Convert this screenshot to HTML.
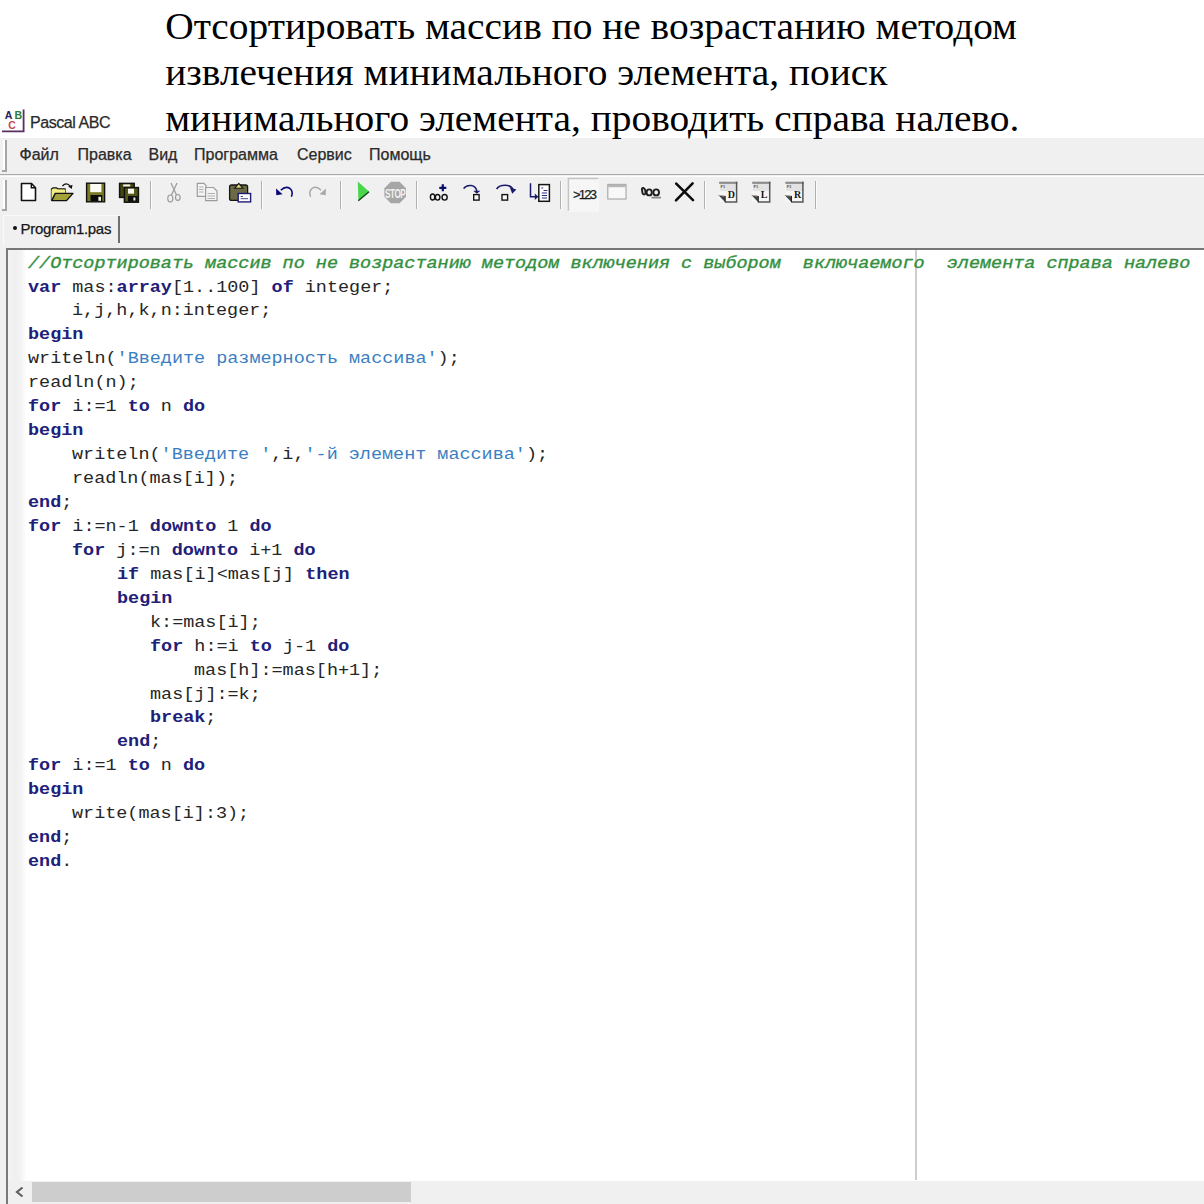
<!DOCTYPE html>
<html><head><meta charset="utf-8">
<style>
html,body{margin:0;padding:0;}
body{width:1204px;height:1204px;position:relative;overflow:hidden;background:#fff;font-family:"Liberation Sans",sans-serif;}
.abs{position:absolute;}
.title{position:absolute;left:165.2px;font-family:"Liberation Serif",serif;font-size:39.4px;line-height:46px;color:#000;white-space:pre;transform:scaleY(0.96);transform-origin:0 36px;}
.ui{position:absolute;font-family:"Liberation Sans",sans-serif;font-size:16px;line-height:18px;color:#2a2a2a;white-space:pre;-webkit-text-stroke:0.25px #2a2a2a;}
#menubar{position:absolute;left:0;top:138px;width:1204px;height:37px;background:#f0f0f0;}
#tbsep{position:absolute;left:0;top:174px;width:1204px;height:1px;background:#a9a9a9;}
#tbhl{position:absolute;left:0;top:176px;width:1204px;height:1px;background:#fdfdfd;}
#toolbar{position:absolute;left:0;top:177px;width:1204px;height:71px;background:#f0f0f0;}
.grip{position:absolute;width:2px;background:#a6a6a6;border-left:2px solid #fdfdfd;}
.grip:after{content:"";position:absolute;left:-3px;bottom:0;width:5px;height:2px;background:#a6a6a6;}
.sep{position:absolute;width:1px;height:28px;top:181px;background:#b4b4b4;border-right:1px solid #fcfcfc;}
#editor{position:absolute;left:6px;top:248px;width:1198px;height:956px;background:#fff;border-top:2px solid #777;border-left:2px solid #7a7a7a;box-sizing:border-box;}
#gutter{position:absolute;left:8px;top:250px;width:18px;height:931px;background:linear-gradient(to right,#f3f3f3 0%,#efefef 45%,#f4f4f4 75%,#fbfbfb 92%,#fff 100%);}
#margin{position:absolute;left:915px;top:250px;width:2px;height:930px;background:#cdcdcd;}
#hscroll{position:absolute;left:8px;top:1181px;width:1196px;height:23px;background:#f0f0f0;}
#thumb{position:absolute;left:32px;top:1182px;width:379px;height:20px;background:#cdcdcd;}
.cl{position:absolute;font-family:"Liberation Mono",monospace;font-size:16px;line-height:18px;letter-spacing:0px;transform:scaleX(1.1529);transform-origin:0 0;white-space:pre;color:#262626;}
.cl .k{font-weight:bold;color:#20207a;}
.cl .s{color:#3a7fc2;}
.cl .c{color:#34903f;font-style:italic;-webkit-text-stroke:0.35px #34903f;}
</style></head>
<body>
<!-- title text -->
<div class="title" style="top:2.5px">Отсортировать массив по не возрастанию методом</div>
<div class="title" style="top:48.5px">извлечения минимального элемента, поиск</div>

<!-- app chrome -->
<div class="abs" style="left:0;top:138px;width:1204px;height:1066px;background:#f0f0f0"></div>
<div id="menubar"></div>
<div id="tbsep"></div>
<div id="tbhl"></div>
<div id="toolbar"></div>

<div class="title" style="top:95px">минимального элемента, проводить справа налево.</div>

<!-- logo -->
<svg class="abs" style="left:0;top:104px" width="30" height="32" viewBox="0 0 30 32">
  <text x="4.8" y="14.5" font-family="Liberation Sans" font-weight="bold" font-size="10.6" fill="#23235e">A</text>
  <text x="14.6" y="14.5" font-family="Liberation Sans" font-weight="bold" font-size="10.6" fill="#2f7a30">B</text>
  <text x="8.3" y="24.6" font-family="Liberation Sans" font-weight="bold" font-size="10.4" fill="#c24a4a">C</text>
  <path d="M23.6 5.6 V27.3 H2" fill="none" stroke="#5a2e60" stroke-width="1.8"/>
</svg>
<div class="ui" style="left:30px;top:113.5px;font-size:16px;letter-spacing:-0.45px;color:#2a2a2a">Pascal ABC</div>

<!-- menubar -->
<div class="grip" style="left:3px;top:140px;height:32px"></div>
<div class="ui" style="left:19.5px;top:146px">Файл</div>
<div class="ui" style="left:77.5px;top:146px">Правка</div>
<div class="ui" style="left:148.5px;top:146px">Вид</div>
<div class="ui" style="left:194px;top:146px">Программа</div>
<div class="ui" style="left:297px;top:146px">Сервис</div>
<div class="ui" style="left:369px;top:146px">Помощь</div>

<!-- toolbar -->
<div class="grip" style="left:3px;top:180px;height:31px"></div>
<svg class="abs" style="left:0;top:175px" width="830" height="40" viewBox="0 175 830 40">
 <!-- separators -->
 <g stroke-width="1">
  <path d="M150.5 181 V209 M261.5 181 V209 M340.5 181 V209 M416.5 181 V209 M560.5 181 V209 M704.5 181 V209 M815.5 181 V209" stroke="#b0b0b0"/>
  <path d="M151.5 181 V209 M262.5 181 V209 M341.5 181 V209 M417.5 181 V209 M561.5 181 V209 M705.5 181 V209 M816.5 181 V209" stroke="#fcfcfc"/>
 </g>
 <!-- new -->
 <path d="M21.5 183.5 H31.5 L35.5 187.8 V200.5 H21.5 Z" fill="#fff" stroke="#111" stroke-width="1.6" stroke-linejoin="round"/>
 <path d="M31.3 183.5 V187.8 H35.5" fill="none" stroke="#111" stroke-width="1.4"/>
 <!-- open -->
 <path d="M51.5 200.5 V189 L53 187.8 H56.5 L58 189 H65 V193" fill="#f2ee86" stroke="#111" stroke-width="1.3"/>
 <path d="M51.5 200.5 V189.5 H65 V193.5 H54.5 Z" fill="#f2ee86"/>
 <path d="M51.8 200.6 L55.2 193.4 H73 L66.5 200.6 Z" fill="#a3a23a" stroke="#111" stroke-width="1.4" stroke-linejoin="round"/>
 <path d="M62.4 186 Q66.5 181.5 70.3 186.3" fill="none" stroke="#111" stroke-width="1.2"/>
 <path d="M68.2 186.6 L72.5 184.8 L71.8 189 Z" fill="#111"/>
 <!-- save -->
 <rect x="86.6" y="183.2" width="18" height="18.6" fill="#7a7a22" stroke="#111" stroke-width="1.4"/>
 <rect x="90.2" y="184" width="11.2" height="8.2" fill="#fbfbf3"/>
 <rect x="90.5" y="195" width="11.8" height="6.2" fill="#0d0d0d"/>
 <rect x="98.4" y="196.8" width="2.6" height="4" fill="#f0f0e0"/>
 <!-- save all -->
 <rect x="119.6" y="183.4" width="14.6" height="14" fill="#46460f" stroke="#111" stroke-width="1.5"/>
 <rect x="123.2" y="184.4" width="7" height="2.2" fill="#f2f2e6"/>
 <rect x="124.4" y="187.6" width="14" height="14.6" fill="#55551a" stroke="#111" stroke-width="1.5"/>
 <rect x="128" y="188.7" width="6" height="5" fill="#f7f7ee"/>
 <rect x="128" y="196" width="9.6" height="5.6" fill="#0d0d0d"/>
 <rect x="133.4" y="197.5" width="2" height="3" fill="#e8e8d8"/>
 <!-- cut (disabled) -->
 <g fill="none" stroke="#9a9a9a" stroke-width="1.2">
  <path d="M171 183 L176.5 195 M177 183 L171.5 195"/>
  <ellipse cx="170.3" cy="198.4" rx="2.5" ry="3.4"/>
  <ellipse cx="177.8" cy="197.4" rx="2.3" ry="2.9"/>
 </g>
 <!-- copy (disabled) -->
 <g fill="#f4f4f4" stroke="#9c9c9c" stroke-width="1.2">
  <path d="M197.3 183.4 H204 L206 185.5 V196.3 H197.3 Z"/>
  <path d="M205.6 187.5 H213.5 L217 191 V200.7 H205.6 Z"/>
 </g>
 <path d="M199 187 H203.5 M199 189.5 H203.5 M199 192 H203.5 M207.5 193.5 H215 M207.5 196 H215 M207.5 198.5 H215" stroke="#a8a8a8" stroke-width="0.9"/>
 <!-- paste -->
 <rect x="229.6" y="185" width="18" height="15.4" rx="2" fill="#6c6a46" stroke="#151515" stroke-width="1.3"/>
 <path d="M234.5 188.3 L238.8 183.4 L243 188.3 Z" fill="#d8d27a" stroke="#151515" stroke-width="1.1"/>
 <rect x="238.2" y="193.5" width="12.4" height="8.4" fill="#fff" stroke="#1d1d78" stroke-width="1.4"/>
 <path d="M240.6 196.5 H243 M240.6 198.7 H248" stroke="#4a4a8a" stroke-width="1"/>
 <!-- undo -->
 <path d="M280.8 190.2 Q285.5 185.5 290 188.5 Q293.5 191.5 291.4 196.8" fill="none" stroke="#0a0a78" stroke-width="1.6"/>
 <path d="M276 188.5 L276.3 195.2 L282.6 194.3 Z" fill="#0a0a78"/>
 <!-- redo disabled -->
 <path d="M321 190.2 Q316.5 185.5 312 188.5 Q308.5 191.5 310.6 196.8" fill="none" stroke="#a9a9a9" stroke-width="1.5"/>
 <path d="M326 188.5 L325.7 195.2 L319.4 194.3 Z" fill="#a9a9a9"/>
 <!-- run -->
 <path d="M357.8 181.6 L369.2 191.7 L358.4 201 Z" fill="#49d64c"/>
 <path d="M369 191.7 L358.3 200.8" stroke="#1a4a1a" stroke-width="1.4"/>
 <!-- stop -->
 <path d="M390.8 181.8 H399.6 L406 188.2 V196.8 L399.6 203.2 H390.8 L384.4 196.8 V188.2 Z" fill="#a6a6a6"/>
 <text x="395.2" y="197.6" font-family="Liberation Sans" font-weight="bold" font-size="12" fill="#f2f2f2" text-anchor="middle" letter-spacing="-0.6" transform="translate(395.2 0) scale(0.68 1) translate(-395.2 0)">STOP</text>
 <!-- watch add -->
 <path d="M442.8 184.3 V191.3 M439.3 187.8 H446.3" stroke="#0c0c6a" stroke-width="2.2"/>
 <g fill="none" stroke="#111" stroke-width="1.4">
  <ellipse cx="432.6" cy="197" rx="2.2" ry="3"/>
  <ellipse cx="437.6" cy="197.3" rx="2.3" ry="2.8"/>
  <ellipse cx="444.6" cy="197.3" rx="2.6" ry="2.8"/>
 </g>
 <!-- step into -->
 <path d="M463.6 188.6 Q466 185 471 185.5 Q476.5 186.3 476.8 191.5" fill="none" stroke="#1a1a6a" stroke-width="1.6"/>
 <path d="M473.3 190.8 H480.4 L476.8 193.8 Z" fill="#1a1a6a"/>
 <rect x="473.7" y="194.6" width="5.4" height="5.5" fill="#fafafa" stroke="#151515" stroke-width="1.4"/>
 <!-- step over -->
 <path d="M496.6 189 Q499 185.3 505 185.3 Q511 185.3 513 189.5" fill="none" stroke="#1a1a6a" stroke-width="1.6"/>
 <path d="M510 187.8 L516.4 189.6 L512.2 193.8 Z" fill="#1a1a6a"/>
 <rect x="502" y="194.6" width="5.6" height="5.5" fill="#fafafa" stroke="#151515" stroke-width="1.4"/>
 <!-- run to cursor -->
 <path d="M530.5 183.3 V196.8 H536" fill="none" stroke="#1a1a6a" stroke-width="1.5"/>
 <path d="M534.8 193.6 L538.4 196.8 L534.8 200 Z" fill="#1a1a6a"/>
 <rect x="538.8" y="184.6" width="10.6" height="16.7" fill="#fff" stroke="#151515" stroke-width="1.5"/>
 <path d="M541.3 188 H543.2 M543.5 190.5 H547.4 M541.8 193 H547 M541.8 195.5 H547 M541.8 198 H547" stroke="#2b2b8a" stroke-width="1.1"/>
 <!-- >123 pressed -->
 <path d="M568.5 211 V178.6 H598.6" fill="none" stroke="#c4c4c4" stroke-width="1.6"/>
 <path d="M598.2 178.6 V211 H568.5" fill="none" stroke="#fbfbfb" stroke-width="1"/>
 <rect x="569.3" y="179.4" width="28.6" height="31" fill="#f6f6f6"/>
 <text x="573" y="198.6" font-family="Liberation Sans" font-size="13" fill="#1a1a1a" letter-spacing="-1.75" stroke="#1a1a1a" stroke-width="0.25">&gt;123</text>
 <!-- window disabled -->
 <rect x="607.8" y="184.4" width="18.2" height="14.6" fill="#f8f8f8" stroke="#a4a4a4" stroke-width="1.1"/>
 <rect x="608.2" y="184.6" width="17.4" height="2.6" fill="#b6b6b6"/>
 <!-- glasses -->
 <g fill="none" stroke="#1e1e1e" stroke-width="1.9">
  <path d="M642 190 Q641.5 187.5 643.5 188 Q646 189.5 645.5 193.5 Q644 195.5 642.6 193.5 Z"/>
  <ellipse cx="649.2" cy="192.4" rx="2.6" ry="3"/>
  <ellipse cx="656.2" cy="192.4" rx="2.8" ry="3"/>
 </g>
 <path d="M651.5 197.6 H661" stroke="#888" stroke-width="1.8"/>
 <!-- X -->
 <path d="M676.2 183.6 L693 200.2 M692.6 183.4 L676 200.3" stroke="#0d0d0d" stroke-width="2.6" stroke-linecap="round"/>
 <!-- D L R -->
 <g transform="translate(718.3 181.7)">
  <rect x="0.8" y="0" width="18.2" height="20.3" fill="#f6f6f6"/>
  <rect x="1.5" y="2.2" width="16.5" height="7" fill="#e2e2e2"/>
  <rect x="0.8" y="0" width="18.2" height="2.2" fill="#8c8c8c"/>
  <path d="M18.3 0 V20.3 H6.8" stroke="#555" stroke-width="1.5" fill="none"/>
  <path d="M0 13.2 L6.9 20.6 V14.2 Z" fill="#444"/><path d="M6.9 14.2 V20.6" stroke="#222" stroke-width="1"/>
  <path d="M0.6 13.6 L6.2 14.4" stroke="#aaa" stroke-width="0.8"/>
  <text x="2.2" y="6.8" font-size="4" font-weight="bold" font-family="Liberation Sans" fill="#555">F1</text>
  <text x="9.4" y="16.8" font-size="10" font-weight="bold" font-family="Liberation Serif" fill="#151515">D</text>
</g>
<g transform="translate(751.4 181.7)">
  <rect x="0.8" y="0" width="18.2" height="20.3" fill="#f6f6f6"/>
  <rect x="1.5" y="2.2" width="16.5" height="7" fill="#e2e2e2"/>
  <rect x="0.8" y="0" width="18.2" height="2.2" fill="#8c8c8c"/>
  <path d="M18.3 0 V20.3 H6.8" stroke="#555" stroke-width="1.5" fill="none"/>
  <path d="M0 13.2 L6.9 20.6 V14.2 Z" fill="#444"/><path d="M6.9 14.2 V20.6" stroke="#222" stroke-width="1"/>
  <path d="M0.6 13.6 L6.2 14.4" stroke="#aaa" stroke-width="0.8"/>
  <text x="2.2" y="6.8" font-size="4" font-weight="bold" font-family="Liberation Sans" fill="#555">F1</text>
  <text x="9.4" y="16.8" font-size="10" font-weight="bold" font-family="Liberation Serif" fill="#151515">L</text>
</g>
<g transform="translate(784.6 181.7)">
  <rect x="0.8" y="0" width="18.2" height="20.3" fill="#f6f6f6"/>
  <rect x="1.5" y="2.2" width="16.5" height="7" fill="#e2e2e2"/>
  <rect x="0.8" y="0" width="18.2" height="2.2" fill="#8c8c8c"/>
  <path d="M18.3 0 V20.3 H6.8" stroke="#555" stroke-width="1.5" fill="none"/>
  <path d="M0 13.2 L6.9 20.6 V14.2 Z" fill="#444"/><path d="M6.9 14.2 V20.6" stroke="#222" stroke-width="1"/>
  <path d="M0.6 13.6 L6.2 14.4" stroke="#aaa" stroke-width="0.8"/>
  <text x="2.2" y="6.8" font-size="4" font-weight="bold" font-family="Liberation Sans" fill="#555">F1</text>
  <text x="9.4" y="16.8" font-size="10" font-weight="bold" font-family="Liberation Serif" fill="#151515">R</text>
</g>

</svg>


<!-- tab -->
<div class="abs" style="left:3px;top:215px;width:115px;height:29px;background:#f0f0f0;border-top:1px solid #fafafa;border-left:1px solid #fafafa"></div>
<div class="abs" style="left:118px;top:216px;width:2px;height:27px;background:#707070"></div>
<div class="abs" style="left:13px;top:226px;width:4px;height:4px;border-radius:2px;background:#111"></div>
<div class="ui" style="left:20.5px;top:220px;font-size:15px;letter-spacing:-0.3px;color:#111">Program1.pas</div>

<!-- editor -->
<div id="editor"></div>
<div id="gutter"></div>
<div id="margin"></div>
<div class="cl" style="left:28.00px;top:254.60px"><span class="c">//Отсортировать массив по не возрастанию методом включения с выбором  включаемого  элемента справа налево</span></div>
<div class="cl" style="left:28.00px;top:278.54px"><span class="k">var</span><span class="n"> </span><span class="n">mas</span><span class="n">:</span><span class="k">array</span><span class="n">[1..100] </span><span class="k">of</span><span class="n"> </span><span class="n">integer</span><span class="n">;</span></div>
<div class="cl" style="left:72.28px;top:302.48px"><span class="n">i</span><span class="n">,</span><span class="n">j</span><span class="n">,</span><span class="n">h</span><span class="n">,</span><span class="n">k</span><span class="n">,</span><span class="n">n</span><span class="n">:</span><span class="n">integer</span><span class="n">;</span></div>
<div class="cl" style="left:28.00px;top:326.42px"><span class="k">begin</span></div>
<div class="cl" style="left:28.00px;top:350.36px"><span class="n">writeln</span><span class="n">(</span><span class="s">&#x27;Введите размерность массива&#x27;</span><span class="n">);</span></div>
<div class="cl" style="left:28.00px;top:374.30px"><span class="n">readln</span><span class="n">(</span><span class="n">n</span><span class="n">);</span></div>
<div class="cl" style="left:28.00px;top:398.24px"><span class="k">for</span><span class="n"> </span><span class="n">i</span><span class="n">:=1 </span><span class="k">to</span><span class="n"> </span><span class="n">n</span><span class="n"> </span><span class="k">do</span></div>
<div class="cl" style="left:28.00px;top:422.18px"><span class="k">begin</span></div>
<div class="cl" style="left:72.28px;top:446.12px"><span class="n">writeln</span><span class="n">(</span><span class="s">&#x27;Введите &#x27;</span><span class="n">,</span><span class="n">i</span><span class="n">,</span><span class="s">&#x27;-й элемент массива&#x27;</span><span class="n">);</span></div>
<div class="cl" style="left:72.28px;top:470.06px"><span class="n">readln</span><span class="n">(</span><span class="n">mas</span><span class="n">[</span><span class="n">i</span><span class="n">]);</span></div>
<div class="cl" style="left:28.00px;top:494.00px"><span class="k">end</span><span class="n">;</span></div>
<div class="cl" style="left:28.00px;top:517.94px"><span class="k">for</span><span class="n"> </span><span class="n">i</span><span class="n">:=</span><span class="n">n</span><span class="n">-1 </span><span class="k">downto</span><span class="n"> 1 </span><span class="k">do</span></div>
<div class="cl" style="left:72.28px;top:541.88px"><span class="k">for</span><span class="n"> </span><span class="n">j</span><span class="n">:=</span><span class="n">n</span><span class="n"> </span><span class="k">downto</span><span class="n"> </span><span class="n">i</span><span class="n">+1 </span><span class="k">do</span></div>
<div class="cl" style="left:116.56px;top:565.82px"><span class="k">if</span><span class="n"> </span><span class="n">mas</span><span class="n">[</span><span class="n">i</span><span class="n">]&lt;</span><span class="n">mas</span><span class="n">[</span><span class="n">j</span><span class="n">] </span><span class="k">then</span></div>
<div class="cl" style="left:116.56px;top:589.76px"><span class="k">begin</span></div>
<div class="cl" style="left:149.77px;top:613.70px"><span class="n">k</span><span class="n">:=</span><span class="n">mas</span><span class="n">[</span><span class="n">i</span><span class="n">];</span></div>
<div class="cl" style="left:149.77px;top:637.64px"><span class="k">for</span><span class="n"> </span><span class="n">h</span><span class="n">:=</span><span class="n">i</span><span class="n"> </span><span class="k">to</span><span class="n"> </span><span class="n">j</span><span class="n">-1 </span><span class="k">do</span></div>
<div class="cl" style="left:194.05px;top:661.58px"><span class="n">mas</span><span class="n">[</span><span class="n">h</span><span class="n">]:=</span><span class="n">mas</span><span class="n">[</span><span class="n">h</span><span class="n">+1];</span></div>
<div class="cl" style="left:149.77px;top:685.52px"><span class="n">mas</span><span class="n">[</span><span class="n">j</span><span class="n">]:=</span><span class="n">k</span><span class="n">;</span></div>
<div class="cl" style="left:149.77px;top:709.46px"><span class="k">break</span><span class="n">;</span></div>
<div class="cl" style="left:116.56px;top:733.40px"><span class="k">end</span><span class="n">;</span></div>
<div class="cl" style="left:28.00px;top:757.34px"><span class="k">for</span><span class="n"> </span><span class="n">i</span><span class="n">:=1 </span><span class="k">to</span><span class="n"> </span><span class="n">n</span><span class="n"> </span><span class="k">do</span></div>
<div class="cl" style="left:28.00px;top:781.28px"><span class="k">begin</span></div>
<div class="cl" style="left:72.28px;top:805.22px"><span class="n">write</span><span class="n">(</span><span class="n">mas</span><span class="n">[</span><span class="n">i</span><span class="n">]:3);</span></div>
<div class="cl" style="left:28.00px;top:829.16px"><span class="k">end</span><span class="n">;</span></div>
<div class="cl" style="left:28.00px;top:853.10px"><span class="k">end</span><span class="n">.</span></div>
<div id="hscroll"></div>
<div id="thumb"></div>
<svg class="abs" style="left:12px;top:1184px" width="16" height="16" viewBox="0 0 16 16"><path d="M10.5 3.5 L5 8 L10.5 12.5" fill="none" stroke="#606060" stroke-width="2.2"/></svg>
</body></html>
